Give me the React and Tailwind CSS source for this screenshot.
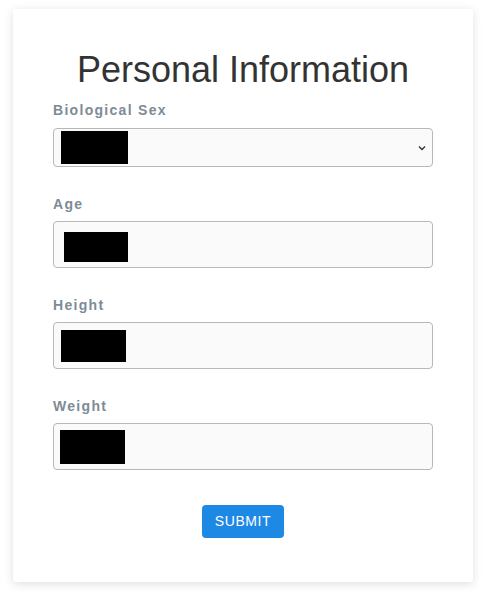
export default function App() {
  const font = { fontFamily: '"Liberation Sans", Arial, sans-serif' };
  const label = "text-[14px] leading-[18px] font-bold tracking-[1.3px] text-[#7d8b97]";
  const box = "flex h-[47px] w-[380px] items-start rounded-[4px] border border-[#b4b9bd] bg-[#fafafa]";
  return (
    <div className="min-h-[592px] w-[485px] bg-white pt-[9px] pl-[13px]" style={font}>
      <div className="flex w-[460px] flex-col rounded-[3px] bg-white px-[40px] pt-[39px] pb-[44px] shadow-[0_2px_10px_rgba(0,0,0,0.13)]">
        <h1 className="text-center text-[36px] leading-[44px] text-[#333]">Personal Information</h1>

        <div className="mt-[9px] flex flex-col gap-[9px]">
          <label className={label}>Biological Sex</label>
          <div className="flex h-[39px] w-[380px] items-center justify-between rounded-[4px] border border-[#b4b9bd] bg-[#fafafa] pl-[7px] pr-[5px]">
            <div className="h-[33px] w-[67px] bg-black" />
            <svg width="10" height="8" viewBox="0 0 10 8">
              <path d="M2 2.5 L5 5.5 L8 2.5" fill="none" stroke="#333" strokeWidth="1.4" />
            </svg>
          </div>
        </div>

        <div className="mt-[28px] flex flex-col gap-[8px]">
          <label className={label}>Age</label>
          <div className={box + " pl-[10px] pt-[10px]"}>
            <div className="h-[30px] w-[64px] bg-black" />
          </div>
        </div>

        <div className="mt-[28px] flex flex-col gap-[8px]">
          <label className={label}>Height</label>
          <div className={box + " pl-[7px] pt-[7px]"}>
            <div className="h-[32px] w-[65px] bg-black" />
          </div>
        </div>

        <div className="mt-[28px] flex flex-col gap-[8px]">
          <label className={label}>Weight</label>
          <div className={box + " pl-[6px] pt-[6px]"}>
            <div className="h-[34px] w-[65px] bg-black" />
          </div>
        </div>

        <div className="mt-[35px] flex justify-center">
          <button className="h-[33px] w-[82px] rounded-[4px] bg-[#1e88e5] text-[14px] tracking-[0.6px] text-white">
            SUBMIT
          </button>
        </div>
      </div>
    </div>
  );
}
